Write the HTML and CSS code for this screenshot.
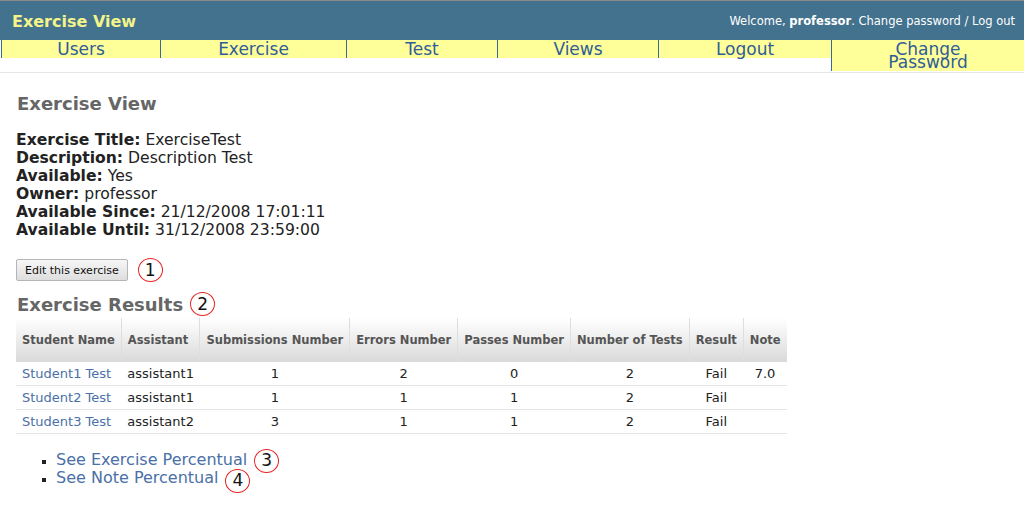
FILE: index.html
```html
<!DOCTYPE html>
<html>
<head>
<meta charset="utf-8">
<title>Exercise View</title>
<link rel="stylesheet" href="styles.css">
</head>
<body>
<header class="topbar">
  <div class="brand">Exercise View</div>
  <div class="welcome">Welcome, <b>professor</b>. Change password / Log out</div>
</header>
<nav class="nav">
  <a class="nav-item w1" href="#">Users</a>
  <a class="nav-item w2" href="#">Exercise</a>
  <a class="nav-item w3" href="#">Test</a>
  <a class="nav-item w4" href="#">Views</a>
  <a class="nav-item w5" href="#">Logout</a>
  <a class="nav-item w6" href="#"><span class="line">Change</span><span class="line">Password</span></a>
</nav>
<main class="content">
  <h2 class="title">Exercise View</h2>
  <div class="details">
    <div><b>Exercise Title:</b> ExerciseTest</div>
    <div><b>Description:</b> Description Test</div>
    <div><b>Available:</b> Yes</div>
    <div><b>Owner:</b> professor</div>
    <div><b>Available Since:</b> 21/12/2008 17:01:11</div>
    <div><b>Available Until:</b> 31/12/2008 23:59:00</div>
  </div>
  <div class="actions">
    <button class="btn">Edit this exercise</button>
    <span class="mark">1</span>
  </div>
  <h2 class="title results">Exercise Results<span class="mark mark2">2</span></h2>
  <table class="grid">
    <thead>
      <tr>
        <th class="left">Student Name</th>
        <th class="left">Assistant</th>
        <th>Submissions Number</th>
        <th>Errors Number</th>
        <th>Passes Number</th>
        <th>Number of Tests</th>
        <th>Result</th>
        <th>Note</th>
      </tr>
    </thead>
    <tbody>
      <tr>
        <td class="left"><a href="#">Student1 Test</a></td>
        <td class="left">assistant1</td>
        <td>1</td><td>2</td><td>0</td><td>2</td><td>Fail</td><td>7.0</td>
      </tr>
      <tr>
        <td class="left"><a href="#">Student2 Test</a></td>
        <td class="left">assistant1</td>
        <td>1</td><td>1</td><td>1</td><td>2</td><td>Fail</td><td></td>
      </tr>
      <tr>
        <td class="left"><a href="#">Student3 Test</a></td>
        <td class="left">assistant2</td>
        <td>3</td><td>1</td><td>1</td><td>2</td><td>Fail</td><td></td>
      </tr>
    </tbody>
  </table>
  <ul class="links">
    <li><a href="#">See Exercise Percentual</a><span class="mark mark3">3</span></li>
    <li><a href="#">See Note Percentual</a><span class="mark mark4">4</span></li>
  </ul>
</main>
</body>
</html>
```
FILE: styles.css
```css
html, body {
  margin: 0;
  padding: 0;
  background: #fff;
}
body {
  font-family: "DejaVu Sans", Verdana, sans-serif;
  color: #222;
}
.topbar {
  border-top: 1px solid #8a8a8a;
  background: #42728e;
  height: 39px;
  display: flex;
  align-items: center;
  justify-content: space-between;
  padding: 0 9px 0 12px;
}
.brand {
  color: #f4f48a;
  font-weight: bold;
  font-size: 16px;
  margin-top: 1px;
}
.welcome {
  color: #fff;
  font-size: 11.5px;
  margin-top: 1px;
}
.nav {
  display: flex;
  align-items: flex-start;
  padding: 0 0 1px 1px;
  border-bottom: 1px solid #e6e6e6;
}
.nav-item {
  display: block;
  box-sizing: border-box;
  background: #ffff99;
  border-left: 1px solid #3a679c;
  color: #2f5d98;
  text-decoration: none;
  text-align: center;
  font-size: 17px;
  line-height: 13px;
  padding: 3px 0 2px;
}
.nav-item .line {
  display: block;
  height: 13px;
}
.w1 { width: 159px; }
.w2 { width: 186px; }
.w3 { width: 151px; }
.w4 { width: 161px; }
.w5 { width: 173px; }
.w6 { flex: 1; }
.content {
  padding: 0 16px 24px;
}
.title {
  color: #666;
  font-size: 18px;
  line-height: 22px;
  margin: 20px 0 0 1px;
}
.details {
  margin-top: 16px;
  font-size: 15.6px;
  line-height: 18px;
  color: #222;
}
.actions {
  display: flex;
  align-items: center;
  gap: 10px;
  margin-top: 19px;
}
.btn {
  font-family: "DejaVu Sans", Verdana, sans-serif;
  font-size: 11px;
  color: #111;
  height: 22px;
  padding: 0 8px;
  border: 1px solid #b5b5b5;
  border-radius: 2px;
  background: linear-gradient(#f6f6f6, #dedede);
}
.mark {
  display: inline-flex;
  align-items: center;
  justify-content: center;
  box-sizing: border-box;
  width: 25px;
  height: 24px;
  border: 1.5px solid #e52424;
  border-radius: 50%;
  color: #111;
  font-size: 17px;
  font-weight: normal;
  line-height: 1;
  font-family: "DejaVu Sans", Verdana, sans-serif;
}
.results {
  margin-top: 12px;
}
.mark2 {
  vertical-align: middle;
  margin: -4px 0 -4px 7px;
  position: relative;
  top: -2px;
}
.grid {
  margin-top: 2px;
  border-collapse: collapse;
  font-size: 13px;
}
.grid th {
  height: 44px;
  padding: 0 6px;
  font-size: 11.5px;
  color: #555;
  background: linear-gradient(#ffffff, #f0f0f0 40%, #d9d9d9);
  text-align: center;
  white-space: nowrap;
}
.grid th + th {
  border-left: 1px solid #dedede;
}
.grid td {
  padding: 4px 6px;
  line-height: 15px;
  border-bottom: 1px solid #e4e4e4;
  text-align: center;
  white-space: nowrap;
  color: #222;
}
.grid .left {
  text-align: left;
}
.grid a {
  color: #4a70a8;
  text-decoration: none;
}
.links {
  margin: 17px 0 0;
  padding-left: 40px;
  list-style: square;
  font-size: 16px;
  line-height: 18px;
}
.links li::marker {
  color: #222;
  font-size: 12px;
}
.links a {
  color: #4a70a8;
  text-decoration: none;
}
.mark3, .mark4 {
  vertical-align: middle;
  margin: -4px 0 -4px 7px;
}
.mark4 {
  position: relative;
  top: 2px;
}
```
